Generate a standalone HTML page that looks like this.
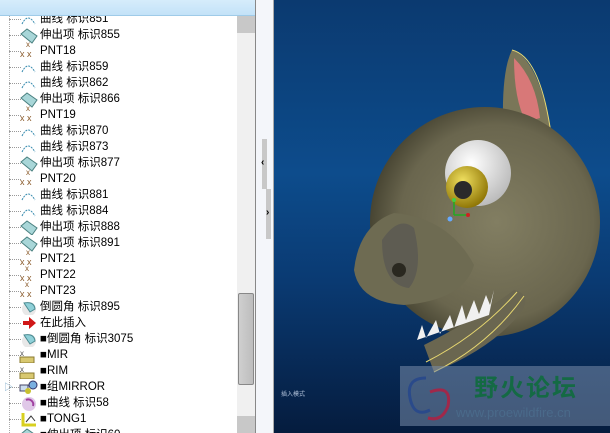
<!DOCTYPE html>
<html><head><meta charset="utf-8"><style>
*{margin:0;padding:0;box-sizing:border-box}
body{width:610px;height:433px;overflow:hidden;position:relative;background:#fff;font-family:"Liberation Sans","Noto Sans CJK SC",sans-serif;font-size:11.5px;color:#000}
#tree{position:absolute;left:0;top:0;width:237px;height:433px;overflow:hidden;background:#fff}
.r{position:absolute;left:0;height:16px;line-height:16px;width:237px;white-space:nowrap}
.r .d{position:absolute;left:9px;top:8px;width:12px;border-top:1px dotted #999}
.r .t{position:absolute;left:40px;top:0}
.r svg{position:absolute;left:18px;top:0}
.vl{position:absolute;left:9px;top:0;height:433px;border-left:1px dotted #aaa}
#bar{position:absolute;left:0;top:0;width:258px;height:16px;background:linear-gradient(#d6ecfb,#c3e2f8);border-bottom:1px solid #9fcbe8}
#sb{position:absolute;left:237px;top:16px;width:18px;height:417px;background:#f0f0f0}
#sb .th{position:absolute;left:1px;top:277px;width:16px;height:92px;background:linear-gradient(90deg,#cfcfcf,#bdbdbd);border:1px solid #888;border-radius:2px}
#sb .a{position:absolute;left:0;width:18px;height:17px;background:#c8c8c8}
#div{position:absolute;left:255px;top:0;width:19px;height:433px;background:#f4f6fa;border-left:1px solid #888;border-right:1px solid #aaa}
#vp{position:absolute;left:274px;top:0;width:336px;height:433px;background:linear-gradient(#0b3a70 0%,#0d4c8c 40%,#0a3a72 65%,#051c3e 100%)}
</style></head><body>
<div id="tree">
<div class="vl"></div>
<div class="r" style="top:11px"><span class="d"></span><svg width="20" height="16"><path d="M4 13 Q10 1 17 13" stroke="#3a8db0" fill="none" stroke-dasharray="2 1"/></svg><span class="t">曲线 标识851</span></div>
<div class="r" style="top:27px"><span class="d"></span><svg width="22" height="20"><path d="M3 7 L9 2 L19 9 L14 16 Z" fill="#a8d6d8" stroke="#4a8080"/><text x="8" y="20" font-size="8" fill="#8a5a2a">x</text></svg><span class="t">伸出项 标识855</span></div>
<div class="r" style="top:43px"><span class="d"></span><svg width="22" height="16"><text x="2" y="14" font-size="9" fill="#8a5a2a">x x</text></svg><span class="t">PNT18</span></div>
<div class="r" style="top:59px"><span class="d"></span><svg width="20" height="16"><path d="M4 13 Q10 1 17 13" stroke="#3a8db0" fill="none" stroke-dasharray="2 1"/></svg><span class="t">曲线 标识859</span></div>
<div class="r" style="top:75px"><span class="d"></span><svg width="20" height="16"><path d="M4 13 Q10 1 17 13" stroke="#3a8db0" fill="none" stroke-dasharray="2 1"/></svg><span class="t">曲线 标识862</span></div>
<div class="r" style="top:91px"><span class="d"></span><svg width="22" height="20"><path d="M3 7 L9 2 L19 9 L14 16 Z" fill="#a8d6d8" stroke="#4a8080"/><text x="8" y="20" font-size="8" fill="#8a5a2a">x</text></svg><span class="t">伸出项 标识866</span></div>
<div class="r" style="top:107px"><span class="d"></span><svg width="22" height="16"><text x="2" y="14" font-size="9" fill="#8a5a2a">x x</text></svg><span class="t">PNT19</span></div>
<div class="r" style="top:123px"><span class="d"></span><svg width="20" height="16"><path d="M4 13 Q10 1 17 13" stroke="#3a8db0" fill="none" stroke-dasharray="2 1"/></svg><span class="t">曲线 标识870</span></div>
<div class="r" style="top:139px"><span class="d"></span><svg width="20" height="16"><path d="M4 13 Q10 1 17 13" stroke="#3a8db0" fill="none" stroke-dasharray="2 1"/></svg><span class="t">曲线 标识873</span></div>
<div class="r" style="top:155px"><span class="d"></span><svg width="22" height="20"><path d="M3 7 L9 2 L19 9 L14 16 Z" fill="#a8d6d8" stroke="#4a8080"/><text x="8" y="20" font-size="8" fill="#8a5a2a">x</text></svg><span class="t">伸出项 标识877</span></div>
<div class="r" style="top:171px"><span class="d"></span><svg width="22" height="16"><text x="2" y="14" font-size="9" fill="#8a5a2a">x x</text></svg><span class="t">PNT20</span></div>
<div class="r" style="top:187px"><span class="d"></span><svg width="20" height="16"><path d="M4 13 Q10 1 17 13" stroke="#3a8db0" fill="none" stroke-dasharray="2 1"/></svg><span class="t">曲线 标识881</span></div>
<div class="r" style="top:203px"><span class="d"></span><svg width="20" height="16"><path d="M4 13 Q10 1 17 13" stroke="#3a8db0" fill="none" stroke-dasharray="2 1"/></svg><span class="t">曲线 标识884</span></div>
<div class="r" style="top:219px"><span class="d"></span><svg width="22" height="16"><path d="M3 7 L9 2 L19 9 L14 16 Z" fill="#a8d6d8" stroke="#4a8080"/></svg><span class="t">伸出项 标识888</span></div>
<div class="r" style="top:235px"><span class="d"></span><svg width="22" height="20"><path d="M3 7 L9 2 L19 9 L14 16 Z" fill="#a8d6d8" stroke="#4a8080"/><text x="8" y="20" font-size="8" fill="#8a5a2a">x</text></svg><span class="t">伸出项 标识891</span></div>
<div class="r" style="top:251px"><span class="d"></span><svg width="22" height="20"><text x="2" y="14" font-size="9" fill="#8a5a2a">x x</text><text x="7" y="20" font-size="8" fill="#8a5a2a">x</text></svg><span class="t">PNT21</span></div>
<div class="r" style="top:267px"><span class="d"></span><svg width="22" height="20"><text x="2" y="14" font-size="9" fill="#8a5a2a">x x</text><text x="7" y="20" font-size="8" fill="#8a5a2a">x</text></svg><span class="t">PNT22</span></div>
<div class="r" style="top:283px"><span class="d"></span><svg width="22" height="16"><text x="2" y="14" font-size="9" fill="#8a5a2a">x x</text></svg><span class="t">PNT23</span></div>
<div class="r" style="top:299px"><span class="d"></span><svg width="22" height="16"><circle cx="11" cy="10" r="7" fill="#e8e8e8"/><path d="M6 4 Q16 2 17 10 L12 13 Z" fill="#8fd0d8" stroke="#4a8a90"/></svg><span class="t">倒圆角 标识895</span></div>
<div class="r" style="top:315px"><span class="d"></span><svg width="22" height="16"><path d="M5 6 H11 V2 L18 8 L11 14 V10 H5 Z" fill="#d01818"/></svg><span class="t">在此插入</span></div>
<div class="r" style="top:331px"><span class="d"></span><svg width="22" height="16"><circle cx="11" cy="10" r="7" fill="#e8e8e8"/><path d="M6 4 Q16 2 17 10 L12 13 Z" fill="#8fd0d8" stroke="#4a8a90"/></svg><span class="t">■倒圆角 标识3075</span></div>
<div class="r" style="top:347px"><span class="d"></span><svg width="22" height="16"><text x="2" y="9" font-size="8" fill="#555">x</text><rect x="2" y="10" width="14" height="6" fill="#d8c870" stroke="#8a7a30"/></svg><span class="t">■MIR</span></div>
<div class="r" style="top:363px"><span class="d"></span><svg width="22" height="16"><text x="2" y="9" font-size="8" fill="#555">x</text><rect x="2" y="10" width="14" height="6" fill="#d8c870" stroke="#8a7a30"/></svg><span class="t">■RIM</span></div>
<div class="r" style="top:379px"><span class="d"></span><span style="position:absolute;left:4px;top:0;color:#7aa8c8;font-size:9px">▷</span><svg width="22" height="16"><rect x="2" y="6" width="8" height="6" fill="#cde" stroke="#446"/><circle cx="15" cy="6" r="4" fill="#7ab0e0" stroke="#336"/><circle cx="10" cy="12" r="3" fill="#c8c030"/></svg><span class="t">■组MIRROR</span></div>
<div class="r" style="top:395px"><span class="d"></span><svg width="22" height="16"><circle cx="11" cy="9" r="7" fill="#e0c8e8"/><path d="M8 5 A5 5 0 0 1 15 11" stroke="#a040a0" fill="none" stroke-width="2"/></svg><span class="t">■曲线 标识58</span></div>
<div class="r" style="top:411px"><span class="d"></span><svg width="22" height="16"><path d="M5 2 V14 H18" stroke="#d8d020" stroke-width="3" fill="none"/><path d="M8 11 L13 5 L17 10" stroke="#333" fill="none"/></svg><span class="t">■TONG1</span></div>
<div class="r" style="top:427px"><span class="d"></span><svg width="22" height="16"><path d="M3 7 L9 2 L19 9 L14 16 Z" fill="#a8d6d8" stroke="#4a8080"/></svg><span class="t">■伸出项 标识60</span></div>
</div>
<div id="bar"></div>
<div id="sb"><div class="a" style="top:0"></div><div class="th"></div><div class="a" style="top:400px"></div></div>
<div id="div">
<div style="position:absolute;left:6px;top:139px;width:5px;height:50px;background:#c8c8c8"></div>
<div style="position:absolute;left:10px;top:189px;width:5px;height:50px;background:#c8c8c8"></div>
<div style="position:absolute;left:5px;top:157px;font-size:10px;font-weight:bold">‹</div>
<div style="position:absolute;left:10px;top:207px;font-size:10px;font-weight:bold">›</div>
</div>
<div id="vp">
<svg width="336" height="433" style="position:absolute;left:0;top:0">
<defs>
<radialGradient id="hg" cx="0.55" cy="0.5" r="0.6"><stop offset="0" stop-color="#827e62"/><stop offset="0.7" stop-color="#6a664e"/><stop offset="1" stop-color="#3a3828"/></radialGradient>
<radialGradient id="ew" cx="0.4" cy="0.35" r="0.7"><stop offset="0" stop-color="#fff"/><stop offset="1" stop-color="#b8b8b8"/></radialGradient>
<radialGradient id="ey" cx="0.4" cy="0.35" r="0.7"><stop offset="0" stop-color="#f0e060"/><stop offset="1" stop-color="#8a7000"/></radialGradient>
</defs>
<path d="M229 120 Q228 70 238 50 Q270 60 283 170 L250 175 Z" fill="#7a7658"/>
<path d="M240 58 Q262 80 266 118 L252 122 Q240 100 240 58 Z" fill="#d87878"/>
<path d="M238 50 Q272 58 281 170" stroke="#e8d870" fill="none"/>
<circle cx="211" cy="222" r="115" fill="url(#hg)"/>
<path d="M80 270 Q85 225 120 213 Q175 218 200 265 Q190 300 130 305 Q85 302 80 270 Z" fill="#6e6b52"/>
<path d="M108 240 Q125 215 140 228 Q150 270 135 288 Q108 285 108 240 Z" fill="#5e5c52"/>
<circle cx="125" cy="270" r="7" fill="#2a2820"/>
<path d="M150 345 Q200 320 240 290 Q260 295 245 315 Q215 350 160 372 Z" fill="#6a6650"/>
<path d="M143 340 L148 325 L152 338 L162 320 L166 334 L176 315 L180 328 L188 305 L192 320 L200 300 L205 314 L212 295 L216 305 L220 290 L215 315 Z" fill="#f0f0f0"/>
<path d="M160 372 Q215 345 250 296" stroke="#e8d870" fill="none"/>
<path d="M152 362 Q205 335 243 292" stroke="#e8d870" fill="none"/>
<circle cx="204" cy="173" r="33" fill="url(#ew)"/>
<circle cx="193" cy="187" r="21" fill="url(#ey)"/>
<circle cx="189" cy="190" r="9" fill="#2a2a2a"/>
<path d="M180 200 V215 M180 215 H194" stroke="#2a2" stroke-width="1.5"/><circle cx="180" cy="200" r="2" fill="#4c4"/><circle cx="194" cy="215" r="2" fill="#c22"/><circle cx="176" cy="219" r="2.5" fill="#6af"/>
</svg>
<div style="position:absolute;left:7px;top:389px;font-size:6px;color:#b0c0d8">插入模式</div>
<div style="position:absolute;left:126px;top:366px;width:210px;height:60px;background:rgba(120,140,170,0.55)"></div>
<svg width="60" height="60" style="position:absolute;left:130px;top:370px"><path d="M22 8 Q2 8 6 28 Q10 48 26 40" stroke="#2a4a8a" stroke-width="3" fill="none"/><path d="M26 22 Q48 14 44 36 Q38 52 24 48" stroke="#a0284a" stroke-width="3" fill="none"/></svg>
<div style="position:absolute;left:200px;top:368px;font-size:24px;font-weight:bold;color:#146a44;letter-spacing:2px;font-family:'Liberation Sans','Noto Sans CJK SC',sans-serif">野火论坛</div>
<div style="position:absolute;left:182px;top:405px;font-size:13px;color:#4a6a8a">www.proewildfire.cn</div>
</div>
</body></html>
